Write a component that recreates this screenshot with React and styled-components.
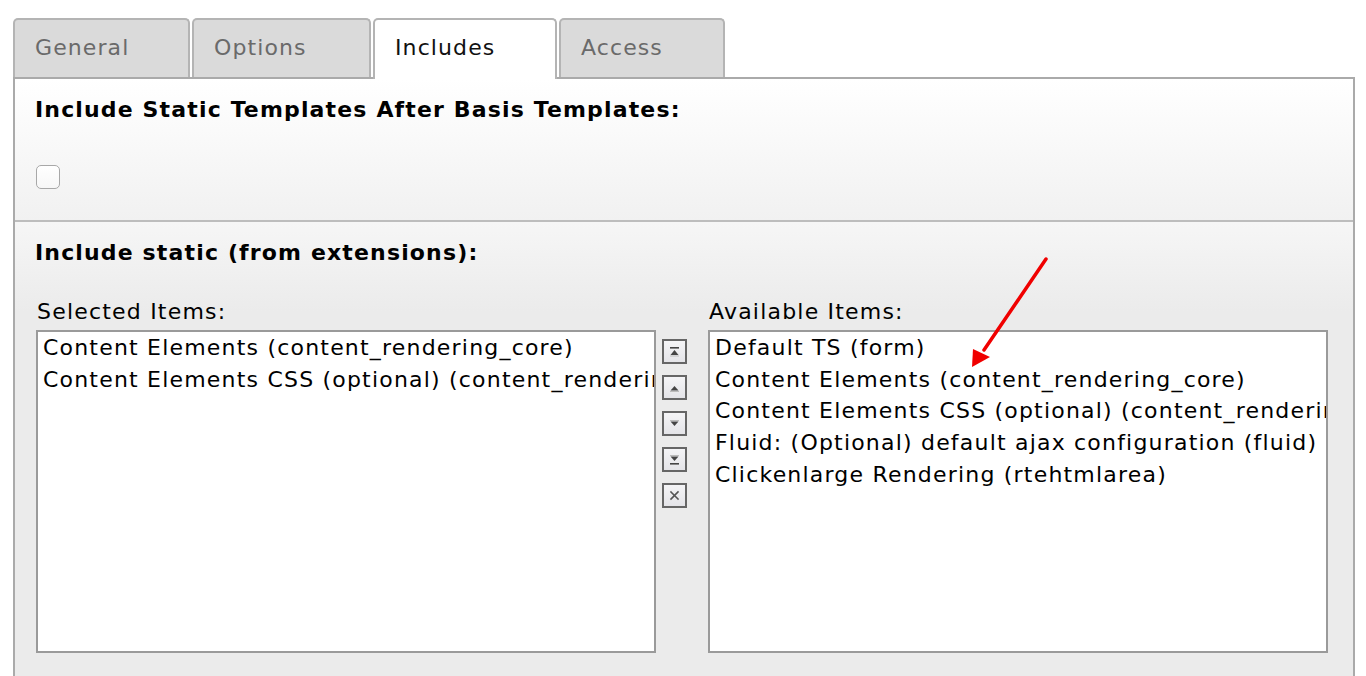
import React from "react";
import styled, { createGlobalStyle } from "styled-components";

const GlobalStyle = createGlobalStyle`
  html, body {
    margin: 0;
    padding: 0;
    background: #ffffff;
    overflow: hidden;
  }
  body {
    font-family: "DejaVu Sans", Verdana, sans-serif;
    font-size: 22px;
    color: #000;
  }
`;

const Page = styled.div`
  position: relative;
  padding: 18px 11px 0 13px;
  height: 676px;
  box-sizing: border-box;
`;

const TabBar = styled.div`
  display: flex;
  gap: 2px;
  align-items: flex-end;
`;

const Tab = styled.div`
  position: relative;
  z-index: ${(p) => (p.$active ? 1 : 0)};
  box-sizing: border-box;
  height: ${(p) => (p.$active ? 61 : 59)}px;
  margin-bottom: ${(p) => (p.$active ? -2 : 0)}px;
  padding: 13px 0 0 20px;
  width: ${(p) => p.$width}px;
  border: 2px solid #b4b4b4;
  border-bottom: none;
  border-radius: 5px 5px 0 0;
  background: ${(p) => (p.$active ? "#ffffff" : "#dadada")};
  color: ${(p) => (p.$active ? "#111" : "#6a6a6a")};
  font-size: 22px;
  line-height: 30px;
  letter-spacing: 1.1px;
  white-space: nowrap;
`;

const Panel = styled.div`
  border: 2px solid #aaaaaa;
  border-bottom: none;
  height: 640px;
  box-sizing: border-box;
`;

const Section = styled.div`
  padding: 18px 20px ${(p) => p.$bottom}px;
  background: ${(p) => p.$bg};
  border-top: ${(p) => (p.$divided ? "2px solid #bdbdbd" : "none")};
`;

const Heading = styled.h3`
  margin: 0;
  font-size: 22px;
  font-weight: 700;
  line-height: 26px;
  letter-spacing: 1.15px;
`;

const Checkbox = styled.div`
  margin: 42px 0 0 1px;
  width: 24px;
  height: 24px;
  box-sizing: border-box;
  border: 1px solid #a8a8a8;
  border-radius: 5px;
  background: linear-gradient(#ffffff, #f7f7f7);
`;

const Chooser = styled.div`
  display: flex;
  align-items: flex-start;
  margin: 33px 0 0 1px;
`;

const Column = styled.div`
  display: flex;
  flex-direction: column;
`;

const Label = styled.div`
  font-size: 22px;
  line-height: 26px;
  letter-spacing: 1.2px;
  padding-left: 1px;
  margin-bottom: 5px;
`;

const ListBox = styled.div`
  width: 620px;
  height: 323px;
  box-sizing: border-box;
  border: 2px solid #9a9a9a;
  background: #ffffff;
  padding: 0 0 0 5px;
  overflow: hidden;
`;

const Item = styled.div`
  font-size: 22px;
  line-height: 31.7px;
  letter-spacing: 1.2px;
  white-space: nowrap;
  overflow: hidden;
`;

const Buttons = styled.div`
  display: flex;
  flex-direction: column;
  gap: 11px;
  margin: 40px 21px 0 6px;
`;

const MoveButton = styled.div`
  width: 25px;
  height: 25px;
  box-sizing: border-box;
  border: 2px solid #666;
  background: linear-gradient(#f4f4f6, #e4e4e8);
  display: flex;
  align-items: center;
  justify-content: center;
  svg {
    display: block;
  }
`;

const ArrowLayer = styled.svg`
  position: absolute;
  left: 0;
  top: 0;
  pointer-events: none;
`;

const icons = {
  top: (
    <>
      <rect x="1" y="1" width="9" height="1.6" fill="#444" />
      <path d="M5.5 4 L9.5 9 L1.5 9 Z" fill="#444" />
      <rect x="1" y="9.5" width="9" height="1" fill="#bbb" />
    </>
  ),
  up: (
    <>
      <path d="M5.5 4 L9.5 8.5 L1.5 8.5 Z" fill="#444" />
      <rect x="1" y="9" width="9" height="1" fill="#bbb" />
    </>
  ),
  down: (
    <>
      <rect x="1" y="2" width="9" height="1" fill="#bbb" />
      <path d="M1.5 3.5 L9.5 3.5 L5.5 8 Z" fill="#444" />
    </>
  ),
  bottom: (
    <>
      <rect x="1" y="1" width="9" height="1" fill="#bbb" />
      <path d="M1.5 2.5 L9.5 2.5 L5.5 7 Z" fill="#444" />
      <rect x="1" y="9" width="9" height="1.6" fill="#444" />
    </>
  ),
  remove: (
    <path
      d="M2 2 L9 9 M9 2 L2 9"
      stroke="#555"
      strokeWidth="1.6"
      strokeLinecap="square"
    />
  ),
};

const tabs = [
  { label: "General", width: 177 },
  { label: "Options", width: 179 },
  { label: "Includes", width: 184, active: true },
  { label: "Access", width: 166 },
];

const selected = [
  "Content Elements (content_rendering_core)",
  "Content Elements CSS (optional) (content_rendering_core)",
];

const available = [
  "Default TS (form)",
  "Content Elements (content_rendering_core)",
  "Content Elements CSS (optional) (content_rendering_core)",
  "Fluid: (Optional) default ajax configuration (fluid)",
  "Clickenlarge Rendering (rtehtmlarea)",
];

export default function App() {
  return (
    <Page>
      <GlobalStyle />
      <TabBar>
        {tabs.map((t) => (
          <Tab key={t.label} $active={t.active} $width={t.width}>
            {t.label}
          </Tab>
        ))}
      </TabBar>
      <Panel>
        <Section $bottom={31} $bg="linear-gradient(#ffffff, #f1f1f1)">
          <Heading>Include Static Templates After Basis Templates:</Heading>
          <Checkbox />
        </Section>
        <Section
          $divided
          $bottom={40}
          $bg="linear-gradient(#f6f6f6 0px, #ebebeb 90px, #ebebeb 100%)"
        >
          <Heading>Include static (from extensions):</Heading>
          <Chooser>
            <Column>
              <Label>Selected Items:</Label>
              <ListBox>
                {selected.map((s) => (
                  <Item key={s}>{s}</Item>
                ))}
              </ListBox>
            </Column>
            <Buttons>
              {["top", "up", "down", "bottom", "remove"].map((k) => (
                <MoveButton key={k}>
                  <svg width="11" height="11" viewBox="0 0 11 11">
                    {icons[k]}
                  </svg>
                </MoveButton>
              ))}
            </Buttons>
            <Column>
              <Label>Available Items:</Label>
              <ListBox>
                {available.map((s) => (
                  <Item key={s}>{s}</Item>
                ))}
              </ListBox>
            </Column>
          </Chooser>
        </Section>
      </Panel>
      <ArrowLayer width="1366" height="676" viewBox="0 0 1366 676">
        <line
          x1="1046"
          y1="259"
          x2="984"
          y2="350"
          stroke="#f00000"
          strokeWidth="3.5"
          strokeLinecap="round"
        />
        <path d="M972 367 L973 349 L990 357 Z" fill="#f00000" />
      </ArrowLayer>
    </Page>
  );
}
